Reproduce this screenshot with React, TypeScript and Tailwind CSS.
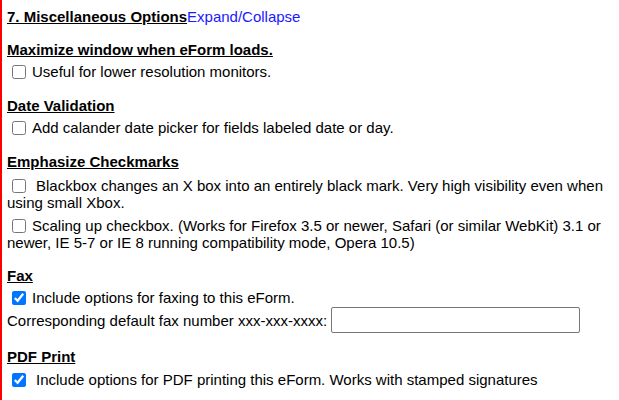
import React from "react";

const font = { fontFamily: '"Liberation Sans", Arial, sans-serif' };

function Cb({ checked = false, extra = false }: { checked?: boolean; extra?: boolean }) {
  return (
    <input
      type="checkbox"
      defaultChecked={checked}
      className={`m-0 ml-[5px] h-[14px] w-[14px] align-[-2px] ${extra ? "mr-[10px]" : "mr-[6px]"}`}
    />
  );
}

function Heading({ children }: { children: React.ReactNode }) {
  return <div className="font-bold underline leading-[17px]">{children}</div>;
}

export default function App() {
  return (
    <div className="min-h-[400px] w-[619px] bg-white text-black text-[15px]" style={font}>
      <div className="border-l-2 border-[#ff0000] pl-[5px] pt-[8px] pb-[10px] min-h-[400px]">
        <div className="leading-[18px]">
          <span className="font-bold underline">7. Miscellaneous Options</span>
          <span className="text-[#1a1aff]">Expand/Collapse</span>
        </div>

        <div className="mt-[15px]">
          <Heading>Maximize window when eForm loads.</Heading>
          <div className="mt-[5px] leading-[17px]">
            <Cb />Useful for lower resolution monitors.
          </div>
        </div>

        <div className="mt-[17px]">
          <Heading>Date Validation</Heading>
          <div className="mt-[5px] leading-[17px]">
            <Cb />Add calander date picker for fields labeled date or day.
          </div>
        </div>

        <div className="mt-[17px]">
          <Heading>Emphasize Checkmarks</Heading>
          <div className="mt-[7px] leading-[17px] pr-[10px]">
            <Cb extra />Blackbox changes an X box into an entirely black mark. Very high visibility even when
            using small Xbox.
          </div>
          <div className="mt-[6px] leading-[17px] pr-[10px]">
            <Cb />Scaling up checkbox. (Works for Firefox 3.5 or newer, Safari (or similar WebKit) 3.1 or
            newer, IE 5-7 or IE 8 running compatibility mode, Opera 10.5)
          </div>
        </div>

        <div className="mt-[16px]">
          <Heading>Fax</Heading>
          <div className="mt-[5px] leading-[17px]">
            <Cb checked />Include options for faxing to this eForm.
          </div>
          <div className="mt-[1px] flex items-center leading-[17px]">
            <span>Corresponding default fax number xxx-xxx-xxxx:</span>
            <input
              type="text"
              className="ml-[4px] h-[26px] w-[249px] rounded-[2px] border border-[#767676] bg-white px-1"
            />
          </div>
        </div>

        <div className="mt-[15px]">
          <Heading>PDF Print</Heading>
          <div className="mt-[6px] leading-[17px]">
            <Cb checked extra />Include options for PDF printing this eForm. Works with stamped signatures
          </div>
        </div>
      </div>
    </div>
  );
}
